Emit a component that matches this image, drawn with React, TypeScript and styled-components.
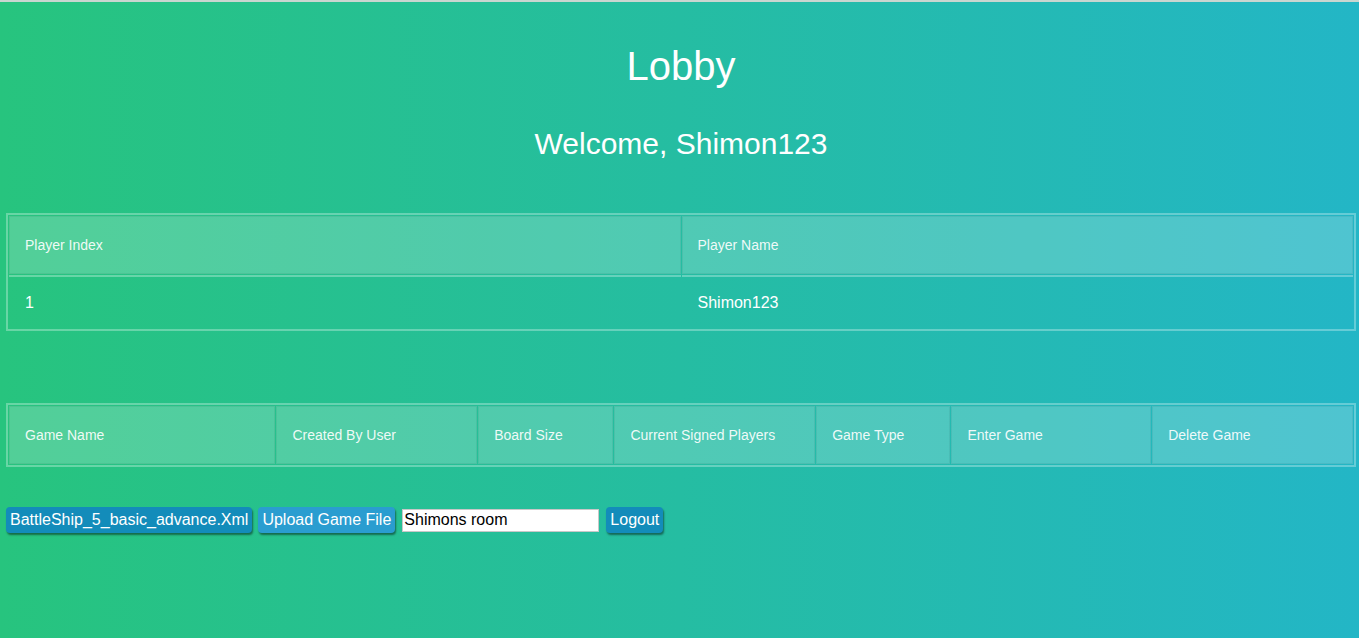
import React from "react";
import styled, { createGlobalStyle } from "styled-components";

const Global = createGlobalStyle`
  html, body { margin: 0; padding: 0; }
  body { font-family: "Liberation Sans", Arial, sans-serif; }
`;

const Page = styled.div`
  min-height: 100vh;
  box-sizing: border-box;
  border-top: 2px solid #c9d6d0;
  background: linear-gradient(to right, #27c47e, #23b6c6);
  padding: 0 3px 0 6px;
  color: #fff;
  display: flex;
  flex-direction: column;
`;

const Title = styled.h1`
  margin: 41px 0 0;
  text-align: center;
  font-size: 40px;
  font-weight: 400;
  line-height: 46px;
`;

const Welcome = styled.h2`
  margin: 37px 0 0;
  text-align: center;
  font-size: 30px;
  font-weight: 400;
  line-height: 36px;
`;

const Table = styled.table<{ $top: number }>`
  margin-top: ${(p) => p.$top}px;
  width: 100%;
  box-sizing: border-box;
  border: 2px solid rgba(255, 255, 255, 0.3);
  border-collapse: separate;
  border-spacing: 1px;
  table-layout: fixed;
`;

const Th = styled.th`
  background: rgba(255, 255, 255, 0.2);
  border: 1px solid rgba(0, 0, 0, 0.05);
  height: 56px;
  padding: 0 15px;
  text-align: left;
  font-weight: 400;
  font-size: 14px;
  color: rgba(255, 255, 255, 0.92);
  white-space: nowrap;
`;

const Td = styled.td`
  border-top: 2px solid rgba(255, 255, 255, 0.3);
  height: 51px;
  padding: 0 16px;
  font-size: 16px;
  color: #fff;
`;

const Toolbar = styled.div`
  margin-top: 40px;
  display: flex;
  align-items: center;
  gap: 6px;
`;

const Button = styled.button<{ $light?: boolean }>`
  font-family: "Liberation Sans", Arial, sans-serif;
  font-size: 16px;
  height: 26px;
  padding: 0 4px;
  color: #fff;
  background: ${(p) => (p.$light ? "#2a9dd0" : "#138cba")};
  border: none;
  border-radius: 4px;
  box-shadow: 1px 2px 2px rgba(0, 0, 0, 0.45);
  cursor: pointer;
`;

const Input = styled.input`
  font-family: "Liberation Sans", Arial, sans-serif;
  font-size: 16px;
  width: 197px;
  height: 23px;
  box-sizing: border-box;
  padding: 0 1px;
  margin: 0 1px;
  border: 1px solid #c8c8c8;
  background: #fff;
  color: #000;
`;

const gameCols = [
  ["Game Name", 268],
  ["Created By User", 202],
  ["Board Size", 136],
  ["Current Signed Players", 202],
  ["Game Type", 135],
  ["Enter Game", 201],
  ["Delete Game", 202],
] as const;

const total = gameCols.reduce((s, [, w]) => s + w, 0);

export default function App() {
  return (
    <>
      <Global />
      <Page>
        <Title>Lobby</Title>
        <Welcome>Welcome, Shimon123</Welcome>
        <Table $top={51}>
          <thead>
            <tr>
              <Th>Player Index</Th>
              <Th>Player Name</Th>
            </tr>
          </thead>
          <tbody>
            <tr>
              <Td>1</Td>
              <Td>Shimon123</Td>
            </tr>
          </tbody>
        </Table>
        <Table $top={72}>
          <colgroup>
            {gameCols.map(([n, w]) => (
              <col key={n} style={{ width: `${(w / total) * 100}%` }} />
            ))}
          </colgroup>
          <thead>
            <tr>
              {gameCols.map(([n]) => (
                <Th key={n}>{n}</Th>
              ))}
            </tr>
          </thead>
          <tbody />
        </Table>
        <Toolbar>
          <Button>BattleShip_5_basic_advance.Xml</Button>
          <Button $light>Upload Game File</Button>
          <Input defaultValue="Shimons room" />
          <Button>Logout</Button>
        </Toolbar>
      </Page>
    </>
  );
}
